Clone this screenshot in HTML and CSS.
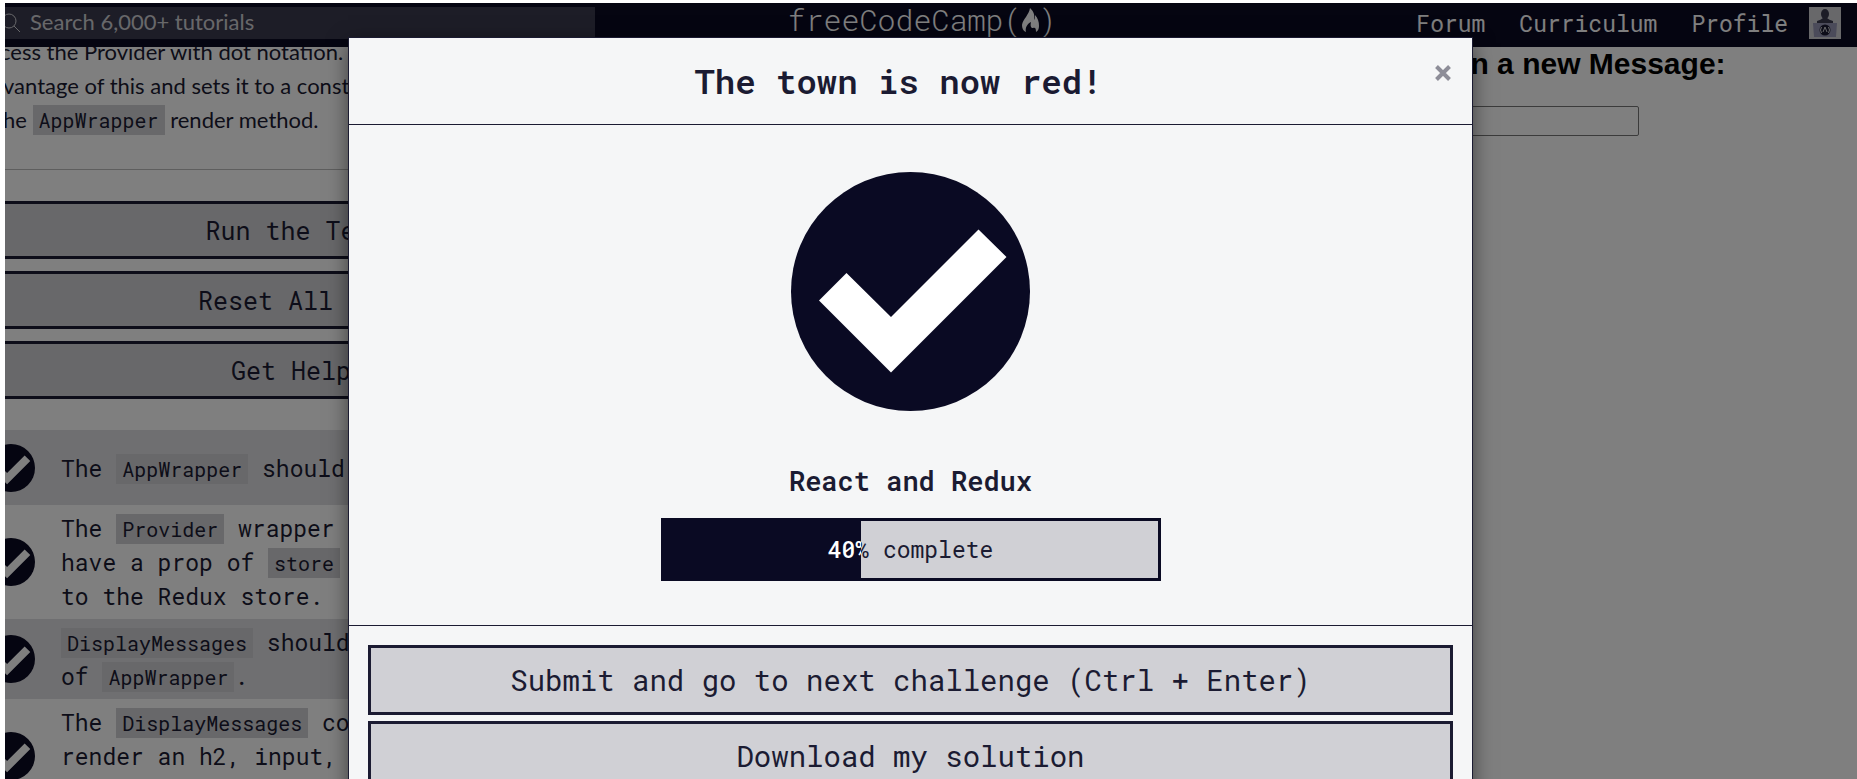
FILE: index.html
```html
<!DOCTYPE html>
<html lang="en">
<head>
<meta charset="utf-8">
<title>React and Redux | freeCodeCamp</title>
<link rel="stylesheet" href="styles.css">
</head>
<body>
<svg class="sprites" aria-hidden="true">
  <symbol id="passed" viewBox="0 0 239 239">
    <circle cx="119.5" cy="119.5" r="119.5" fill="#0a0a23"/>
    <path fill="#fff" d="M28 128.500 55.500 101 100 145 187.500 57.500 215.500 85 100 200.500z"/>
  </symbol>
</svg>
<div class="page">
  <header class="nav">
    <label class="search">
      <svg class="search-icon" viewBox="0 0 20 20" aria-hidden="true"><circle cx="8" cy="8" r="7"/><path d="M13 13l6 6"/></svg>
      <input class="search-input" type="search" aria-label="Search" placeholder="Search 6,000+ tutorials">
    </label>
    <a class="logo" href="#">freeCodeCamp(<svg class="flame" viewBox="0 0 17 24" aria-hidden="true"><path d="M8 0c4 4 5 7 4 12 1-1 1-3 1-5 3 3 4 7 4 11 0 3-1 5-3 6 0-4-1-5-3-4-2 0-3-2-2-6-4 2-6 6-5 10-3-1-4-4-4-7 1-6 7-10 8-17z"/></svg>)</a>
    <nav class="links">
      <a href="#">Forum</a>
      <a href="#">Curriculum</a>
      <a href="#">Profile</a>
      <a class="avatar" href="#" aria-label="Account">
        <svg viewBox="0 0 32 32" aria-hidden="true"><path fill="#d0d0d5" d="M0 0h32v32H0z"/><ellipse cx="16" cy="7" rx="4" ry="5" fill="#3b3b4f"/><path fill="#3b3b4f" d="M14 11h4q2 2 6 3v2H8v-2q4-1 6-3z"/><path fill="#9696b4" d="M4 16h24l-1 14H5z"/><circle cx="16" cy="23" r="5.500" fill="#1b1b32"/><path d="M12.500 20q-2 3 0 6M19.500 20q2 3 0 6M14 25l2-5 2 5" fill="none" stroke="#d0d0d5"/></svg>
      </a>
    </nav>
  </header>
  <main class="workspace">
    <section class="lesson">
      <p class="prose">cess the Provider with dot notation.<br>vantage of this and sets it to a constant<br>he <code>AppWrapper</code> render method.</p>
      <hr class="rule">
      <div class="actions">
        <button class="action" type="button">Run the Tests</button>
        <button class="action" type="button">Reset All Code</button>
        <button class="action" type="button">Get Help<span class="caret"></span></button>
      </div>
      <ul class="tests">
        <li><svg class="mark" role="img" aria-label="Passed"><use href="#passed"/></svg><p>The <code>AppWrapper</code> should render.</p></li>
        <li><svg class="mark" role="img" aria-label="Passed"><use href="#passed"/></svg><p>The <code>Provider</code> wrapper component should<br>have a prop of <code>store</code> passed to it, equal<br>to the Redux store.</p></li>
        <li><svg class="mark" role="img" aria-label="Passed"><use href="#passed"/></svg><p><code>DisplayMessages</code> should render as a child<br>of <code>AppWrapper</code>.</p></li>
        <li><svg class="mark" role="img" aria-label="Passed"><use href="#passed"/></svg><p>The <code>DisplayMessages</code> component should<br>render an h2, input, button, and<br>ul element.</p></li>
      </ul>
    </section>
    <section class="preview">
      <h2><label for="message">Type in a new Message:</label></h2>
      <input id="message" type="text">
    </section>
  </main>
  <div class="backdrop">
    <div class="modal" role="dialog" aria-modal="true" aria-labelledby="modal-title">
      <div class="modal-header">
        <h1 id="modal-title">The town is now red!</h1>
        <button class="close" type="button" aria-label="Close"><svg viewBox="0 0 16 16" aria-hidden="true"><path d="M1.500 1.500l13 13M14.500 1.500l-13 13"/></svg></button>
      </div>
      <div class="modal-body">
        <svg class="badge" role="img" aria-label="Passed"><use href="#passed"/></svg>
        <h2>React and Redux</h2>
        <div class="progress">
          <span class="progress-text">40% complete</span>
          <div class="progress-fill" style="width:40%" aria-hidden="true"><span class="progress-text">40% complete</span></div>
        </div>
      </div>
      <div class="modal-footer">
        <button type="button">Submit and go to next challenge (Ctrl + Enter)</button>
        <button type="button">Download my solution</button>
      </div>
    </div>
  </div>
</div>
</body>
</html>
```
FILE: styles.css
```css
:root {
  --mono: "Roboto Mono", "Liberation Mono", monospace;
  --sans: Lato, "Open Sans", sans-serif;
  --ink: #1b1b32;
  --navy: #0a0a23;
  --grey: #d0d0d5;
}

* { box-sizing: border-box; }

body {
  margin: 0;
  padding: 3px 0 0 5px;
  height: 100vh;
  overflow: hidden;
  background: #fff;
  color: var(--ink);
  font-family: var(--mono);
  font-size: 23px;
  line-height: 34px;
}

h1, h2, p, ul { margin: 0; padding: 0; }
button { font-family: inherit; color: inherit; }
.sprites { position: absolute; width: 0; height: 0; }

.page { position: relative; height: 100%; overflow: hidden; }

.nav {
  position: relative;
  z-index: 1;
  display: grid;
  grid-template-columns: minmax(0, 590px) minmax(0, 654px) 1fr;
  align-items: center;
  height: 44px;
  padding: 4px 16px 8px 0;
  background: var(--navy);
  color: #fff;
}
.nav a { color: inherit; text-decoration: none; }
.search {
  display: flex;
  align-items: center;
  gap: 9px;
  height: 32px;
  margin-left: -4px;
  background: #3b3b4f;
}
.search-icon { width: 20px; height: 20px; fill: none; stroke: var(--grey); stroke-width: 1; flex: none; }
.search-input {
  flex: 1;
  border: 0;
  padding: 0 0 2px;
  background: none;
  color: #fff;
  font: 22px/30px var(--sans);
}
.search-input::placeholder { color: var(--grey); opacity: 1; }
.logo {
  justify-self: center;
  align-self: start;
  display: flex;
  align-items: center;
  font-size: 30px;
  font-weight: 300;
  line-height: 26px;
}
.flame { width: 17px; height: 24px; fill: #fff; }
.links { display: flex; align-items: center; justify-content: flex-end; gap: 34px; line-height: 32px; }
.avatar { width: 32px; height: 32px; margin-left: -13px; }
.avatar svg { display: block; width: 32px; height: 32px; }

.workspace {
  display: grid;
  grid-template-columns: minmax(0, 596px) 1fr 471px;
  margin-top: -12px;
}
.lesson { grid-column: 1; white-space: nowrap; }
.prose { margin-left: -2px; font-family: var(--sans); font-size: 22px; text-indent: -3px; }
code {
  padding: 2px 6px;
  background: var(--grey);
  font-family: var(--mono);
  font-size: 20px;
  line-height: 20px;
}
.rule { margin: 32px 0 0; border: 0; border-top: 1px solid #bcbcbc; }
.actions { display: grid; gap: 12px; margin: 31px -8px 31px; }
.action {
  height: 58px;
  padding: 0;
  border: 3px solid var(--ink);
  background: var(--grey);
  font-size: 25px;
}
.caret {
  display: inline-block;
  margin-left: 12px;
  border: 6px solid transparent;
  border-top-color: var(--ink);
  border-bottom: 0;
}
.tests { list-style: none; }
.tests li {
  display: flex;
  align-items: center;
  gap: 26px;
  min-height: 75px;
  padding: 6px 0;
  margin-left: -18px;
}
.tests li:nth-child(odd) { background: #dfdfe2; }
.mark { width: 48px; height: 48px; flex: none; }

.preview { grid-column: 3; font-family: "Liberation Sans", Arial, sans-serif; padding-top: 11px; }
.preview h2 { margin-bottom: 24px; color: #000; font-size: 30px; line-height: 36px; }
.preview input {
  display: block;
  width: 253px;
  height: 30px;
  border: 1px solid #767676;
  border-radius: 2px;
  background: #fff;
}

.backdrop {
  position: absolute;
  z-index: 2;
  inset: 0;
  display: flex;
  justify-content: center;
  align-items: flex-start;
  padding: 34px 41px 0 0;
  background: rgba(0, 0, 0, .5);
}
.modal {
  width: 1125px;
  border: 1px solid var(--ink);
  background: #f5f6f7;
  box-shadow: 0 6px 19px rgba(0, 0, 0, .5);
}
.modal-header {
  display: flex;
  align-items: flex-start;
  padding: 18px 19px;
  border-bottom: 1px solid var(--ink);
}
.modal-header h1 { flex: 1; text-align: center; font-size: 34px; font-weight: 600; line-height: 50px; }
.close { width: 24px; padding: 9px 0 0 6px; border: 0; background: none; }
.close svg { display: block; width: 16px; height: 16px; stroke: #8d8d98; stroke-width: 4; }
.modal-body {
  display: flex;
  flex-direction: column;
  align-items: center;
  padding: 47px 19px 44px;
  border-bottom: 1px solid var(--ink);
}
.badge { width: 239px; height: 239px; }
.modal-body h2 { margin: 50px 0 17px; font-size: 27px; font-weight: 600; line-height: 40px; }
.progress {
  position: relative;
  width: 500px;
  height: 63px;
  background: var(--grey);
  box-shadow: inset 0 0 0 3px var(--navy);
}
.progress-text { display: block; width: 500px; text-align: center; line-height: 63px; }
.progress-fill {
  position: absolute;
  inset: 0 auto 0 0;
  overflow: hidden;
  background: var(--navy);
  color: #fff;
  font-weight: 500;
}
.modal-footer { display: grid; gap: 6px; padding: 19px; }
.modal-footer button {
  height: 70px;
  border: 3px solid var(--ink);
  background: var(--grey);
  font-size: 29px;
}
```
